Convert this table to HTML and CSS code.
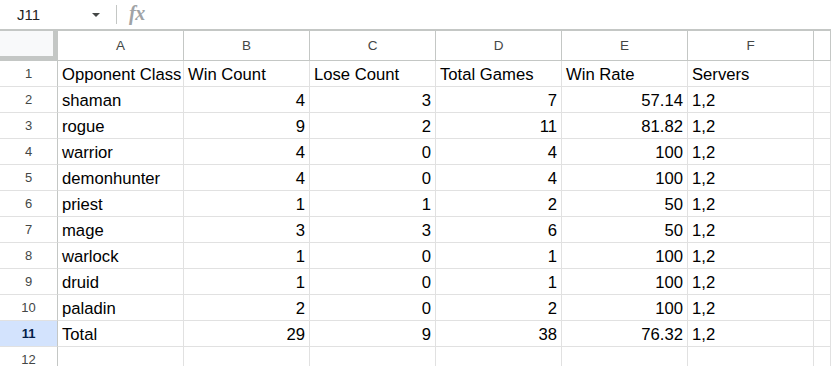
FILE: index.html
```
<!DOCTYPE html>
<html>
<head>
<meta charset="utf-8">
<link rel="stylesheet" href="styles.css">
</head>
<body>
<div class="formula-bar">
  <div class="name-box"><span class="name">J11</span><span class="caret"></span></div>
  <div class="sep"></div>
  <div class="fx">fx</div>
</div>
<div class="grid">
  <div class="corner"><div class="corner-fill"></div></div>
  <div class="ch">A</div><div class="ch">B</div><div class="ch">C</div><div class="ch">D</div><div class="ch">E</div><div class="ch">F</div><div class="ch"></div>

  <div class="rh">1</div><div class="c">Opponent Class</div><div class="c">Win Count</div><div class="c">Lose Count</div><div class="c">Total Games</div><div class="c">Win Rate</div><div class="c">Servers</div><div class="c"></div>
  <div class="rh">2</div><div class="c">shaman</div><div class="c n">4</div><div class="c n">3</div><div class="c n">7</div><div class="c n">57.14</div><div class="c">1,2</div><div class="c"></div>
  <div class="rh">3</div><div class="c">rogue</div><div class="c n">9</div><div class="c n">2</div><div class="c n">11</div><div class="c n">81.82</div><div class="c">1,2</div><div class="c"></div>
  <div class="rh">4</div><div class="c">warrior</div><div class="c n">4</div><div class="c n">0</div><div class="c n">4</div><div class="c n">100</div><div class="c">1,2</div><div class="c"></div>
  <div class="rh">5</div><div class="c">demonhunter</div><div class="c n">4</div><div class="c n">0</div><div class="c n">4</div><div class="c n">100</div><div class="c">1,2</div><div class="c"></div>
  <div class="rh">6</div><div class="c">priest</div><div class="c n">1</div><div class="c n">1</div><div class="c n">2</div><div class="c n">50</div><div class="c">1,2</div><div class="c"></div>
  <div class="rh">7</div><div class="c">mage</div><div class="c n">3</div><div class="c n">3</div><div class="c n">6</div><div class="c n">50</div><div class="c">1,2</div><div class="c"></div>
  <div class="rh">8</div><div class="c">warlock</div><div class="c n">1</div><div class="c n">0</div><div class="c n">1</div><div class="c n">100</div><div class="c">1,2</div><div class="c"></div>
  <div class="rh">9</div><div class="c">druid</div><div class="c n">1</div><div class="c n">0</div><div class="c n">1</div><div class="c n">100</div><div class="c">1,2</div><div class="c"></div>
  <div class="rh">10</div><div class="c">paladin</div><div class="c n">2</div><div class="c n">0</div><div class="c n">2</div><div class="c n">100</div><div class="c">1,2</div><div class="c"></div>
  <div class="rh sel">11</div><div class="c">Total</div><div class="c n">29</div><div class="c n">9</div><div class="c n">38</div><div class="c n">76.32</div><div class="c">1,2</div><div class="c"></div>
  <div class="rh">12</div><div class="c"></div><div class="c"></div><div class="c"></div><div class="c"></div><div class="c"></div><div class="c"></div><div class="c"></div>
</div>
</body>
</html>
```
FILE: styles.css
```
html, body {
  margin: 0;
  padding: 0;
  background: #fff;
  overflow: hidden;
}
body {
  font-family: "Liberation Sans", Arial, sans-serif;
  color: #000;
}
.formula-bar {
  height: 29px;
  display: flex;
  align-items: center;
  border-bottom: 2px solid #c4c7c5;
}
.name-box {
  width: 115px;
  display: flex;
  align-items: center;
  box-sizing: border-box;
  padding-left: 17px;
}
.name {
  font-size: 15px;
  color: #1f1f1f;
  width: 75px;
}
.caret {
  width: 0;
  height: 0;
  border-left: 4px solid transparent;
  border-right: 4px solid transparent;
  border-top: 4px solid #444746;
  margin-top: 1px;
}
.sep {
  width: 1px;
  height: 19px;
  background: #c4c7c5;
  margin-left: 1px;
}
.fx {
  margin-left: 12px;
  font-family: "Liberation Serif", serif;
  font-style: italic;
  font-weight: bold;
  font-size: 20px;
  color: #a0a3a6;
  letter-spacing: -0.5px;
  margin-top: -3px;
}
.grid {
  display: grid;
  grid-template-columns: 58px repeat(6, 126px) 1fr;
  grid-template-rows: 30px;
  grid-auto-rows: 26px;
}
.grid > div {
  box-sizing: border-box;
  white-space: nowrap;
}
.corner {
  border-right: 1px solid #c4c7c5;
  border-bottom: 1px solid #c4c7c5;
  background: #fff;
}
.corner-fill {
  height: 100%;
  box-sizing: border-box;
  background: #f8f9fa;
  border-right: 4px solid #c4c7c5;
  border-bottom: 4px solid #c4c7c5;
}
.ch {
  border-right: 1px solid #c4c7c5;
  border-bottom: 1px solid #c4c7c5;
  text-align: center;
  font-size: 13.5px;
  line-height: 29px;
  color: #444746;
}
.rh {
  border-right: 1px solid #c4c7c5;
  border-bottom: 1px solid #e1e1e1;
  text-align: center;
  font-size: 13px;
  line-height: 25px;
  color: #444746;
}
.rh.sel {
  background: #d3e3fd;
  color: #041e49;
  font-weight: bold;
}
.c {
  border-right: 1px solid #e1e1e1;
  border-bottom: 1px solid #e1e1e1;
  font-size: 16.67px;
  line-height: 24px;
  padding: 2px 4px 0;
}
.c.n {
  text-align: right;
}
```
